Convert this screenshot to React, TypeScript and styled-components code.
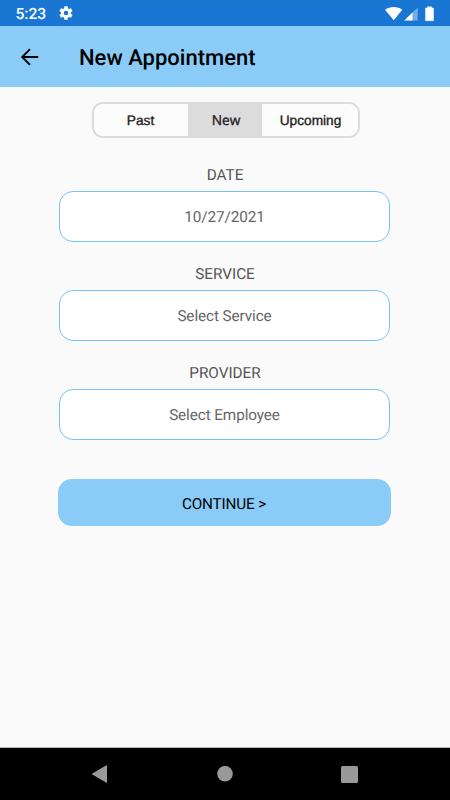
import React from "react";
import styled, { createGlobalStyle } from "styled-components";

const Global = createGlobalStyle`
  * { box-sizing: border-box; }
  body { margin: 0; font-family: Roboto, sans-serif; background: #fafafa; text-rendering: geometricPrecision; }
  button { font-family: inherit; margin: 0; padding: 0; text-rendering: inherit; }
`;

const Screen = styled.div`
  width: 450px;
  height: 800px;
  display: flex;
  flex-direction: column;
  background: #fafafa;
  overflow: hidden;
`;

const StatusBar = styled.div`
  height: 26px;
  flex: none;
  display: flex;
  align-items: center;
  padding: 0 15px 0 15.5px;
  background: #1976d2;
  color: #fff;
`;

const Clock = styled.span`
  width: 42px;
  font-size: 15.6px;
  font-weight: 500;
  line-height: 18px;
  padding-top: 2px;
`;

const StatusIcons = styled.div`
  display: flex;
  align-items: center;
  margin-left: auto;
  padding-top: 1px;
`;

const Header = styled.header`
  height: 61px;
  flex: none;
  display: flex;
  align-items: center;
  padding: 0 18px;
  background: #8accf7;
`;

const BackButton = styled.button`
  width: 61px;
  height: 24px;
  border: 0;
  background: none;
  text-align: left;
  line-height: 0;
`;

const Title = styled.h1`
  margin: 0;
  font-size: 22px;
  font-weight: 500;
  line-height: 28px;
  color: #000;
  padding-top: 4px;
`;

const Content = styled.main`
  flex: 1;
  display: flex;
  flex-direction: column;
  align-items: center;
  padding-top: 15px;
  border-bottom: 1px solid #b8b8b8;
`;

const Tabs = styled.div`
  width: 268px;
  height: 36px;
  margin-left: 1px;
  display: grid;
  grid-template-columns: 94px 74px 1fr;
  border: 2px solid #dcdcdc;
  border-radius: 11px;
  overflow: hidden;
`;

const Tab = styled.button<{ $active?: boolean; $drop: number; $shift?: number; $sans?: boolean }>`
  border: 0;
  background: ${(p) => (p.$active ? "#dcdcdc" : "#fcfcfc")};
  color: #222;
  font-family: ${(p) => (p.$sans ? '"Open Sans"' : '"Liberation Sans"')}, sans-serif;
  font-size: 13.7px;
  line-height: 18px;
  -webkit-text-stroke: 0.35px #222;
  padding-top: ${(p) => p.$drop}px;
  padding-left: ${(p) => p.$shift ?? 0}px;
`;

const Form = styled.form`
  display: flex;
  flex-direction: column;
  align-items: center;
  margin-top: 26.5px;
`;

const Field = styled.div`
  height: 99.2px;
  display: flex;
  flex-direction: column;
  align-items: center;
`;

const Label = styled.label`
  height: 26.5px;
  font-size: 15.3px;
  line-height: 20px;
  color: #555;
`;

const Picker = styled.button`
  width: 331px;
  height: 50.5px;
  border: 1px solid #78c3f4;
  border-radius: 14px;
  background: #fff;
  color: #666;
  font-size: 15.3px;
  letter-spacing: -0.1px;
  margin-right: 1px;
  padding-top: 1.2px;
`;

const Continue = styled.button`
  width: 333px;
  height: 47px;
  margin: 16.5px 2px 0 0;
  border: 0;
  border-radius: 14px;
  background: #8accf7;
  color: #000;
  font-size: 15.3px;
  letter-spacing: -0.17px;
  padding-top: 3px;
`;

const NavBar = styled.nav`
  height: 52px;
  flex: none;
  display: flex;
  align-items: center;
  justify-content: space-between;
  padding: 0 92px 0 91px;
  background: #000;
`;

const fields = [
  { label: "DATE", value: "10/27/2021" },
  { label: "SERVICE", value: "Select Service" },
  { label: "PROVIDER", value: "Select Employee" },
];

export default function App() {
  return (
    <>
      <Global />
      <Screen>
        <StatusBar>
          <Clock>5:23</Clock>
          <svg width="16" height="16" viewBox="0 0 24 24" fill="#fff">
            <path d="M19.43 12.98c.04-.32.07-.64.07-.98s-.03-.66-.07-.98l2.11-1.65c.19-.15.24-.42.12-.64l-2-3.46c-.12-.22-.39-.3-.61-.22l-2.49 1c-.52-.4-1.08-.73-1.69-.98l-.38-2.65C14.46 2.18 14.25 2 14 2h-4c-.25 0-.46.18-.49.42l-.38 2.65c-.61.25-1.17.59-1.69.98l-2.49-1c-.23-.09-.49 0-.61.22l-2 3.46c-.13.22-.07.49.12.64l2.11 1.65c-.04.32-.07.65-.07.98s.03.66.07.98l-2.11 1.65c-.19.15-.24.42-.12.64l2 3.46c.12.22.39.3.61.22l2.49-1c.52.4 1.08.73 1.69.98l.38 2.65c.03.24.24.42.49.42h4c.25 0 .46-.18.49-.42l.38-2.65c.61-.25 1.17-.59 1.69-.98l2.49 1c.23.09.49 0 .61-.22l2-3.46c.12-.22.07-.49-.12-.64zM12 15.5a3.5 3.5 0 1 1 0-7 3.5 3.5 0 0 1 0 7z" />
          </svg>
          <StatusIcons>
            <svg width="50" height="16" viewBox="0 0 50 16">
              <path d="M0 3.8C5 0 12.5 0 17.3 3.8L8.7 14.2Z" fill="#fff" />
              <path d="M19.3 14.4L32.7 1.5V14.4Z" fill="#75ade4" />
              <path d="M19.3 14.4L27.5 6.5V14.4Z" fill="#fff" />
              <path d="M40.5 2h2V.8h4V2h2v12.7h-8z" fill="#fff" stroke="#fff" strokeWidth=".5" strokeLinejoin="round" />
            </svg>
          </StatusIcons>
        </StatusBar>
        <Header>
          <BackButton type="button" aria-label="Back">
            <svg width="24" height="24" viewBox="0 0 24 24" fill="none" stroke="#000" strokeWidth="1.9">
              <path d="M20.2 12H4.5M12 4.2L4.2 12L12 19.8" />
            </svg>
          </BackButton>
          <Title>New Appointment</Title>
        </Header>
        <Content>
          <Tabs>
            <Tab $drop={2}>Past</Tab>
            <Tab $active $sans $drop={2} $shift={3}>New</Tab>
            <Tab $drop={1} $shift={2}>Upcoming</Tab>
          </Tabs>
          <Form onSubmit={(e) => e.preventDefault()}>
            {fields.map((f) => (
              <Field key={f.label}>
                <Label>{f.label}</Label>
                <Picker type="button">{f.value}</Picker>
              </Field>
            ))}
            <Continue type="submit">CONTINUE &gt;</Continue>
          </Form>
        </Content>
        <NavBar>
          <svg width="16" height="18" viewBox="0 0 16 18" fill="#999">
            <path d="M.5 9L15.4.2Q16 0 16 .7V17.4Q16 18 15.4 17.7Z" />
          </svg>
          <svg width="17" height="16" viewBox="0 0 17 16" fill="#999">
            <circle cx="9" cy="7.7" r="7.8" />
          </svg>
          <svg width="17" height="17" viewBox="0 0 17 17" fill="#999">
            <rect width="17" height="17" rx="1.5" />
          </svg>
        </NavBar>
      </Screen>
    </>
  );
}
